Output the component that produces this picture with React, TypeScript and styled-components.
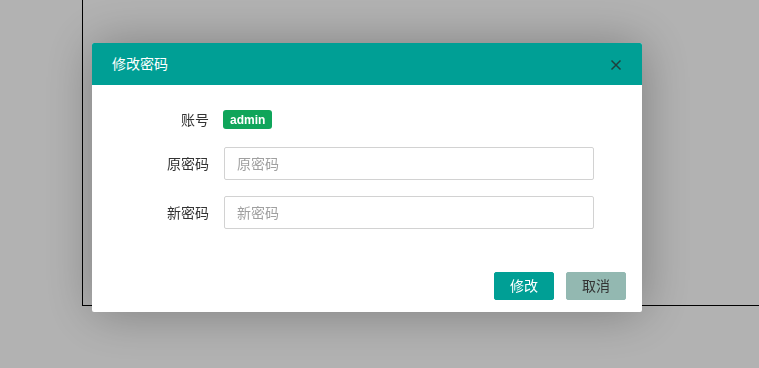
import React from "react";
import styled, { createGlobalStyle } from "styled-components";

const GlobalStyle = createGlobalStyle`
  html, body {
    margin: 0;
    padding: 0;
    background: #ffffff;
    font-family: "Liberation Sans", "Noto Sans CJK SC", sans-serif;
    font-size: 14px;
    color: #333;
  }
  * { box-sizing: border-box; }
`;

const Page = styled.div`
  width: 759px;
  height: 368px;
  padding-left: 82px;
  overflow: hidden;
`;

const BackBox = styled.div`
  height: 306px;
  border-left: 1px solid #000;
  border-bottom: 1px solid #000;
`;

const Shade = styled.div`
  position: fixed;
  inset: 0;
  background: rgba(0, 0, 0, 0.3);
`;

const Dialog = styled.div`
  position: fixed;
  left: 92px;
  top: 43px;
  width: 550px;
  height: 269px;
  background: #fff;
  border-radius: 2px;
  box-shadow: 1px 1px 50px rgba(0, 0, 0, 0.3);
  display: flex;
  flex-direction: column;
  overflow: hidden;
`;

const Header = styled.div`
  height: 42px;
  flex: none;
  background: #009f95;
  color: #fff;
  display: flex;
  align-items: center;
  justify-content: space-between;
  padding: 0 20px 2px 20px;
  font-family: "Noto Sans CJK SC", sans-serif;
  font-size: 14px;
`;

const CloseBtn = styled.span`
  display: flex;
  width: 12px;
  height: 12px;
  margin-top: 3px;
`;

const Body = styled.div`
  flex: 1;
  padding-top: 22px;
  display: flex;
  flex-direction: column;
`;

const Row = styled.div<{ $h: number; $mb: number }>`
  display: flex;
  align-items: center;
  height: ${(p) => p.$h}px;
  margin-bottom: ${(p) => p.$mb}px;
`;

const Label = styled.label`
  width: 132px;
  padding-right: 15px;
  padding-bottom: 2px;
  text-align: right;
  font-family: "Noto Sans CJK SC", sans-serif;
  font-size: 14px;
  color: #333;
`;

const Tag = styled.span`
  display: inline-flex;
  align-items: center;
  height: 19px;
  padding: 0 7px;
  margin-left: -1px;
  background: #0fa55a;
  color: #fff;
  border-radius: 3px;
  font-family: "Liberation Sans", sans-serif;
  font-weight: bold;
  font-size: 12px;
`;

const Input = styled.input`
  width: 370px;
  height: 33px;
  border: 1px solid #d2d2d2;
  border-radius: 2px;
  padding: 0 12px 2px;
  font-family: "Noto Sans CJK SC", sans-serif;
  font-size: 14px;
  color: #333;
  outline: none;
  &::placeholder { color: #a0a0a0; }
`;

const Footer = styled.div`
  display: flex;
  justify-content: flex-end;
  gap: 12px;
  padding: 0 16px 12px;
`;

const Btn = styled.button<{ $primary?: boolean }>`
  width: 60px;
  height: 28px;
  border: 1px solid ${(p) => (p.$primary ? "#009f95" : "#92b8b1")};
  border-radius: 2px;
  background: ${(p) => (p.$primary ? "#009f95" : "#93b8b1")};
  color: ${(p) => (p.$primary ? "#fff" : "#333")};
  font-family: "Noto Sans CJK SC", sans-serif;
  font-size: 14px;
  padding: 0 0 2px;
  cursor: pointer;
`;

export default function App() {
  return (
    <>
      <GlobalStyle />
      <Page>
        <BackBox />
      </Page>
      <Shade />
      <Dialog>
        <Header>
          <span>修改密码</span>
          <CloseBtn>
            <svg width="12" height="12" viewBox="0 0 12 12">
              <path d="M1.5 1.5 L10.5 10.5 M10.5 1.5 L1.5 10.5" stroke="#1f3f3c" strokeWidth="1.5" />
            </svg>
          </CloseBtn>
        </Header>
        <Body>
          <Row $h={25} $mb={15}>
            <Label>账号</Label>
            <Tag>admin</Tag>
          </Row>
          <Row $h={33} $mb={16}>
            <Label>原密码</Label>
            <Input type="password" placeholder="原密码" />
          </Row>
          <Row $h={33} $mb={0}>
            <Label>新密码</Label>
            <Input type="password" placeholder="新密码" />
          </Row>
        </Body>
        <Footer>
          <Btn $primary>修改</Btn>
          <Btn>取消</Btn>
        </Footer>
      </Dialog>
    </>
  );
}
